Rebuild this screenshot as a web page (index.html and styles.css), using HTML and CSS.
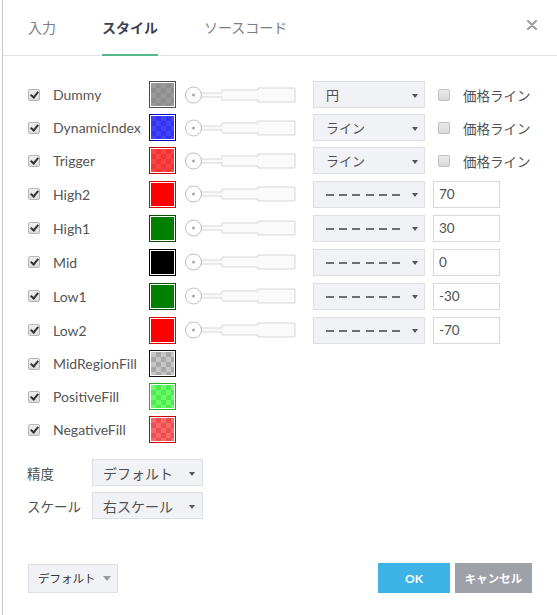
FILE: index.html
```html
<!DOCTYPE html>
<html lang="ja">
<head>
<meta charset="utf-8">
<title>スタイル</title>
<link rel="stylesheet" href="styles.css">
</head>
<body>
<div class="dialog">
  <div class="header">
    <div class="tab">入力</div>
    <div class="tab active">スタイル</div>
    <div class="tab">ソースコード</div>
    <svg class="close" width="10" height="10" viewBox="0 0 10 10"><path d="M1 1 L9 9 M9 1 L1 9" stroke="#9a9da3" stroke-width="2" stroke-linecap="round"/></svg>
  </div>

  <div class="content">
    <div class="row h33">
      <span class="cb checked"></span><span class="label">Dummy</span>
      <span class="swatch sw-dummy"><i></i></span>
      <svg class="slider" width="111" height="18" viewBox="0 0 111 18"><path d="M16 7 H37 V4 H73 V2 H110 V16 H73 V14 H37 V11 H16 Z" fill="#fafafa" stroke="#d6d7da"/><circle cx="8.5" cy="9" r="8" fill="#fff" stroke="#b9bdc6"/><circle cx="8.5" cy="9" r="1.6" fill="#a9adb6"/></svg>
      <div class="select"><span class="val">円</span><span class="arrow"></span></div>
      <span class="cb price"></span><span class="plabel">価格ライン</span>
    </div>
    <div class="row h33">
      <span class="cb checked"></span><span class="label">DynamicIndex</span>
      <span class="swatch sw-dyn"><i></i></span>
      <svg class="slider" width="111" height="18" viewBox="0 0 111 18"><path d="M16 7 H37 V4 H73 V2 H110 V16 H73 V14 H37 V11 H16 Z" fill="#fafafa" stroke="#d6d7da"/><circle cx="8.5" cy="9" r="8" fill="#fff" stroke="#b9bdc6"/><circle cx="8.5" cy="9" r="1.6" fill="#a9adb6"/></svg>
      <div class="select"><span class="val">ライン</span><span class="arrow"></span></div>
      <span class="cb price"></span><span class="plabel">価格ライン</span>
    </div>
    <div class="row h33">
      <span class="cb checked"></span><span class="label">Trigger</span>
      <span class="swatch sw-trig"><i></i></span>
      <svg class="slider" width="111" height="18" viewBox="0 0 111 18"><path d="M16 7 H37 V4 H73 V2 H110 V16 H73 V14 H37 V11 H16 Z" fill="#fafafa" stroke="#d6d7da"/><circle cx="8.5" cy="9" r="8" fill="#fff" stroke="#b9bdc6"/><circle cx="8.5" cy="9" r="1.6" fill="#a9adb6"/></svg>
      <div class="select"><span class="val">ライン</span><span class="arrow"></span></div>
      <span class="cb price"></span><span class="plabel">価格ライン</span>
    </div>
    <div class="row h34">
      <span class="cb checked"></span><span class="label">High2</span>
      <span class="swatch sw-red"><i></i></span>
      <svg class="slider" width="111" height="18" viewBox="0 0 111 18"><path d="M16 7 H37 V4 H73 V2 H110 V16 H73 V14 H37 V11 H16 Z" fill="#fafafa" stroke="#d6d7da"/><circle cx="8.5" cy="9" r="8" fill="#fff" stroke="#b9bdc6"/><circle cx="8.5" cy="9" r="1.6" fill="#a9adb6"/></svg>
      <div class="select"><span class="dashes"></span><span class="arrow"></span></div>
      <div class="num">70</div>
    </div>
    <div class="row h34">
      <span class="cb checked"></span><span class="label">High1</span>
      <span class="swatch sw-green"><i></i></span>
      <svg class="slider" width="111" height="18" viewBox="0 0 111 18"><path d="M16 7 H37 V4 H73 V2 H110 V16 H73 V14 H37 V11 H16 Z" fill="#fafafa" stroke="#d6d7da"/><circle cx="8.5" cy="9" r="8" fill="#fff" stroke="#b9bdc6"/><circle cx="8.5" cy="9" r="1.6" fill="#a9adb6"/></svg>
      <div class="select"><span class="dashes"></span><span class="arrow"></span></div>
      <div class="num">30</div>
    </div>
    <div class="row h34">
      <span class="cb checked"></span><span class="label">Mid</span>
      <span class="swatch sw-black"><i></i></span>
      <svg class="slider" width="111" height="18" viewBox="0 0 111 18"><path d="M16 7 H37 V4 H73 V2 H110 V16 H73 V14 H37 V11 H16 Z" fill="#fafafa" stroke="#d6d7da"/><circle cx="8.5" cy="9" r="8" fill="#fff" stroke="#b9bdc6"/><circle cx="8.5" cy="9" r="1.6" fill="#a9adb6"/></svg>
      <div class="select"><span class="dashes"></span><span class="arrow"></span></div>
      <div class="num">0</div>
    </div>
    <div class="row h34">
      <span class="cb checked"></span><span class="label">Low1</span>
      <span class="swatch sw-green"><i></i></span>
      <svg class="slider" width="111" height="18" viewBox="0 0 111 18"><path d="M16 7 H37 V4 H73 V2 H110 V16 H73 V14 H37 V11 H16 Z" fill="#fafafa" stroke="#d6d7da"/><circle cx="8.5" cy="9" r="8" fill="#fff" stroke="#b9bdc6"/><circle cx="8.5" cy="9" r="1.6" fill="#a9adb6"/></svg>
      <div class="select"><span class="dashes"></span><span class="arrow"></span></div>
      <div class="num">-30</div>
    </div>
    <div class="row h34">
      <span class="cb checked"></span><span class="label">Low2</span>
      <span class="swatch sw-red"><i></i></span>
      <svg class="slider" width="111" height="18" viewBox="0 0 111 18"><path d="M16 7 H37 V4 H73 V2 H110 V16 H73 V14 H37 V11 H16 Z" fill="#fafafa" stroke="#d6d7da"/><circle cx="8.5" cy="9" r="8" fill="#fff" stroke="#b9bdc6"/><circle cx="8.5" cy="9" r="1.6" fill="#a9adb6"/></svg>
      <div class="select"><span class="dashes"></span><span class="arrow"></span></div>
      <div class="num">-70</div>
    </div>
    <div class="row h33">
      <span class="cb checked"></span><span class="label">MidRegionFill</span>
      <span class="swatch sw-mid"><i></i></span>
    </div>
    <div class="row h33">
      <span class="cb checked"></span><span class="label">PositiveFill</span>
      <span class="swatch sw-pos"><i></i></span>
    </div>
    <div class="row h33">
      <span class="cb checked"></span><span class="label">NegativeFill</span>
      <span class="swatch sw-neg"><i></i></span>
    </div>

    <div class="opts">
      <div class="orow">
        <span class="olabel">精度</span>
        <div class="select osel"><span class="val">デフォルト</span><span class="arrow"></span></div>
      </div>
      <div class="orow">
        <span class="olabel">スケール</span>
        <div class="select osel"><span class="val">右スケール</span><span class="arrow"></span></div>
      </div>
    </div>
  </div>

  <div class="footer">
    <div class="defbtn"><span>デフォルト</span><span class="arrow light"></span></div>
    <div class="btns">
      <div class="btn ok">OK</div>
      <div class="btn cancel">キャンセル</div>
    </div>
  </div>
</div>
</body>
</html>
```

FILE: styles.css
```css
html, body {
  margin: 0;
  padding: 0;
  background: #fff;
}
body {
  font-family: Lato, "Noto Sans CJK JP", sans-serif;
  color: #505050;
  width: 557px;
  height: 615px;
  overflow: hidden;
}
.dialog {
  margin-left: 2px;
  border-left: 1px solid #c7c9ce;
  height: 615px;
  box-sizing: border-box;
  display: flex;
  flex-direction: column;
}
.header {
  height: 56px;
  box-sizing: border-box;
  border-bottom: 1px solid #e0e3e8;
  display: flex;
  align-items: stretch;
  padding-left: 25px;
}
.tab {
  display: flex;
  align-items: center;
  font-family: "Noto Sans CJK JP", sans-serif;
  font-size: 14px;
  color: #7a7d84;
  margin-right: 46px;
  border-bottom: 2px solid transparent;
  margin-bottom: -1px;
}
.tab.active {
  color: #3c4250;
  font-weight: 700;
  border-bottom-color: #56b887;
}
.close {
  margin-left: auto;
  margin-right: 20px;
  margin-top: 20px;
}
.content {
  padding: 22px 0 0 25px;
}
.row {
  display: flex;
  align-items: center;
}
.h33 { height: 33px; }
.h34 { height: 34px; }
.cb {
  width: 12px;
  height: 12px;
  box-sizing: border-box;
  border: 1px solid #b3b5b9;
  border-radius: 2px;
  background: linear-gradient(#f0f0f0, #dcdcdc);
  flex: none;
  position: relative;
}
.cb.checked::after {
  content: "";
  position: absolute;
  left: 3px;
  top: 0px;
  width: 3px;
  height: 6px;
  border-right: 2px solid #333;
  border-bottom: 2px solid #333;
  transform: rotate(40deg);
}
.row > .cb:first-child {
  margin-right: 13px;
}
.label {
  width: 96px;
  font-size: 14px;
  color: #555;
  white-space: nowrap;
}
.swatch {
  width: 27px;
  height: 27px;
  box-sizing: border-box;
  border: 1px solid #555;
  padding: 1px;
  background: #fff;
  flex: none;
  display: flex;
}
.swatch i {
  flex: 1;
  display: block;
}
.sw-dummy { border-color: #4d4d4d; }
.sw-dummy i {
  background: linear-gradient(rgba(128,128,128,0.8), rgba(128,128,128,0.8)),
    repeating-conic-gradient(#c8c8c8 0 25%, #fff 0 50%) 0 0 / 10px 10px;
}
.sw-dyn { border-color: #0000c8; }
.sw-dyn i {
  background: linear-gradient(rgba(0,0,255,0.74), rgba(0,0,255,0.74)),
    repeating-conic-gradient(#c8c8c8 0 25%, #fff 0 50%) 0 0 / 10px 10px;
}
.sw-trig { border-color: #c00000; }
.sw-trig i {
  background: linear-gradient(rgba(255,0,0,0.74), rgba(255,0,0,0.74)),
    repeating-conic-gradient(#c8c8c8 0 25%, #fff 0 50%) 0 0 / 10px 10px;
}
.sw-red { border-color: #e00000; }
.sw-red i { background: #ff0000; }
.sw-green { border-color: #004d00; }
.sw-green i { background: #008000; }
.sw-black { border-color: #000; }
.sw-black i { background: #000; }
.sw-mid { border-color: #111; }
.sw-mid i {
  background: linear-gradient(rgba(128,128,128,0.45), rgba(128,128,128,0.45)),
    repeating-conic-gradient(#c8c8c8 0 25%, #fff 0 50%) 0 0 / 10px 10px;
}
.sw-pos { border-color: #22b022; }
.sw-pos i {
  background: linear-gradient(rgba(0,255,0,0.6), rgba(0,255,0,0.6)),
    repeating-conic-gradient(#c8c8c8 0 25%, #fff 0 50%) 0 0 / 10px 10px;
}
.sw-neg { border-color: #cc0000; }
.sw-neg i {
  background: linear-gradient(rgba(255,0,0,0.6), rgba(255,0,0,0.6)),
    repeating-conic-gradient(#c8c8c8 0 25%, #fff 0 50%) 0 0 / 10px 10px;
}
.slider {
  margin-left: 9px;
  flex: none;
  display: block;
}
.select {
  margin-left: 17px;
  width: 112px;
  height: 27px;
  box-sizing: border-box;
  border: 1px solid #dcdfe4;
  background: #f1f2f6;
  display: flex;
  align-items: center;
  padding-left: 12px;
  padding-right: 6px;
  flex: none;
}
.val {
  font-family: "Noto Sans CJK JP", sans-serif;
  font-size: 13px;
  color: #505050;
  flex: 1;
  white-space: nowrap;
}
.dashes {
  flex: none;
  width: 74px;
  height: 2px;
  margin-top: 1px;
  background: repeating-linear-gradient(90deg, #6f6f6f 0 8px, transparent 8px 13.2px);
  margin-right: auto;
}
.arrow {
  flex: none;
  width: 0;
  height: 0;
  border-left: 3.5px solid transparent;
  border-right: 3.5px solid transparent;
  border-top: 4px solid #555;
  margin-top: 2px;
}
.arrow.light {
  border-left-width: 4px;
  border-right-width: 4px;
  border-top: 5px solid #9a9a9a;
  margin-top: 0;
}
.cb.price {
  margin-left: 13px;
  margin-right: 13px;
  background: linear-gradient(#eaeaea, #d9d9d9);
  border-color: #bdbfc3;
}
.plabel {
  font-family: "Noto Sans CJK JP", sans-serif;
  font-size: 13.5px;
  color: #505050;
  white-space: nowrap;
}
.num {
  margin-left: 8px;
  width: 67px;
  height: 27px;
  box-sizing: border-box;
  border: 1px solid #d6d9de;
  background: #fff;
  font-size: 13.5px;
  color: #505050;
  padding-left: 5px;
  display: flex;
  align-items: center;
}
.opts {
  margin-top: 10px;
  margin-left: -1px;
}
.orow {
  display: flex;
  align-items: center;
  height: 33px;
}
.olabel {
  width: 65px;
  font-family: "Noto Sans CJK JP", sans-serif;
  font-size: 13.5px;
  color: #505050;
  white-space: nowrap;
}
.select.osel {
  margin-left: 0;
  width: 111px;
  padding-left: 10px;
  padding-right: 7px;
}
.osel .val {
  font-size: 14px;
}
.footer {
  margin-top: auto;
  margin-bottom: 22px;
  padding: 0 25px;
  display: flex;
  align-items: center;
  justify-content: space-between;
}
.defbtn {
  width: 90px;
  height: 29px;
  box-sizing: border-box;
  border: 1px solid #dcdfe4;
  background: #f1f2f6;
  display: flex;
  align-items: center;
  padding-left: 9px;
  gap: 7px;
  font-family: "Noto Sans CJK JP", sans-serif;
  font-size: 11.5px;
  color: #333;
}
.btns {
  display: flex;
  gap: 5px;
}
.btn {
  height: 30px;
  display: flex;
  align-items: center;
  justify-content: center;
  color: #fff;
  font-weight: 700;
  font-family: "Noto Sans CJK JP", sans-serif;
  font-size: 11.5px;
}
.btn.ok {
  width: 72px;
  background: #3db3e5;
  font-family: Lato, sans-serif;
  font-size: 12px;
}
.btn.cancel {
  width: 77px;
  background: #9ea1a8;
}
```
